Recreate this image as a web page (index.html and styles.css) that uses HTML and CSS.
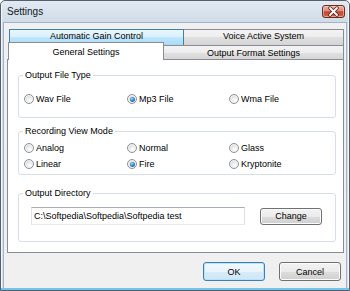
FILE: index.html
```html
<!DOCTYPE html>
<html>
<head>
<meta charset="utf-8">
<link rel="stylesheet" href="styles.css">
</head>
<body>
<div class="window">
  <div class="titlebar">
    <span class="title">Settings</span>
    <div class="close">
      <svg width="21" height="11" viewBox="0 0 21 11">
        <path d="M7 2 L14 9 M14 2 L7 9" stroke="#5b2015" stroke-width="3.4" stroke-linecap="round" fill="none"/>
        <path d="M7 2 L14 9 M14 2 L7 9" stroke="#ffffff" stroke-width="1.8" stroke-linecap="round" fill="none"/>
      </svg>
    </div>
  </div>
  <div class="client">
    <div class="tabs">
      <div class="tabrow back">
        <div class="tab hover w175">Automatic Gain Control</div>
        <div class="tab w161">Voice Active System</div>
      </div>
      <div class="tabrow front">
        <div class="tab selected w156">General Settings</div>
        <div class="tab w181">Output Format Settings</div>
      </div>
    </div>
    <div class="panel">
      <fieldset class="group g1">
        <legend>Output File Type</legend>
        <div class="gbody radios one">
          <label class="opt"><span class="radio"></span>Wav File</label>
          <label class="opt"><span class="radio on"></span>Mp3 File</label>
          <label class="opt"><span class="radio"></span>Wma File</label>
        </div>
      </fieldset>
      <fieldset class="group g2">
        <legend>Recording View Mode</legend>
        <div class="gbody radios two">
          <label class="opt"><span class="radio"></span>Analog</label>
          <label class="opt"><span class="radio"></span>Normal</label>
          <label class="opt"><span class="radio"></span>Glass</label>
          <label class="opt"><span class="radio"></span>Linear</label>
          <label class="opt"><span class="radio on"></span>Fire</label>
          <label class="opt"><span class="radio"></span>Kryptonite</label>
        </div>
      </fieldset>
      <fieldset class="group g3">
        <legend>Output Directory</legend>
        <div class="gbody dirrow">
          <input class="path" type="text" value="C:\Softpedia\Softpedia\Softpedia test" readonly>
          <button class="btn change">Change</button>
        </div>
      </fieldset>
    </div>
    <div class="actions">
      <button class="btn default">OK</button>
      <button class="btn">Cancel</button>
    </div>
  </div>
</div>
</body>
</html>
```
FILE: styles.css
```css
html, body {
  margin: 0;
  padding: 0;
}
body {
  width: 350px;
  height: 291px;
  overflow: hidden;
  font-family: "Liberation Sans", Arial, sans-serif;
  font-size: 9px;
  color: #000;
}
.window {
  box-sizing: border-box;
  width: 350px;
  height: 291px;
  border: 1px solid #55606d;
  border-radius: 5px 5px 0 0;
  background: linear-gradient(#e2eaf3, #cfdbe8 22px, #d6e0eb);
  padding: 0 2px 2px;
  display: flex;
  flex-direction: column;
  box-shadow: inset 0 -2px 0 #72c4ea, inset 1px 0 0 #f4f8fb, inset -1px 0 0 #f4f8fb;
}
.titlebar {
  height: 21px;
  flex: none;
  display: flex;
  align-items: center;
  justify-content: space-between;
  padding: 0 2px 0 4px;
}
.title {
  font-size: 10px;
  color: #101820;
}
.close {
  box-sizing: border-box;
  width: 23px;
  height: 13px;
  border: 1px solid #6e2c20;
  border-radius: 3px;
  background: linear-gradient(#eab1a3 0%, #dc8b78 45%, #c5452d 52%, #d26549 100%);
  display: flex;
  align-items: center;
  justify-content: center;
  box-shadow: inset 0 0 0 1px rgba(255, 220, 210, 0.5);
}
.close svg {
  display: block;
}
.client {
  flex: 1;
  background: #f0f0f0;
  border-left: 1px solid #a4b4c6;
  border-right: 1px solid #a4b4c6;
  border-top: 1px solid #a4b4c6;
  display: flex;
  flex-direction: column;
}
.tabs {
  margin: 6px 2px 0 3px;
}
.tabrow {
  display: flex;
  align-items: flex-end;
}
.tabrow.back {
  padding-left: 2px;
  height: 16px;
}
.tabrow.front {
  padding-left: 1px;
  margin-top: -3px;
  height: 18px;
}
.tab {
  box-sizing: border-box;
  border: 1px solid #898c95;
  border-bottom: none;
  text-align: center;
  line-height: 12px;
  background: linear-gradient(#f4f4f4 0%, #ececec 50%, #e0e0e0 50%, #d4d4d4 100%);
  white-space: nowrap;
}
.tab + .tab {
  margin-left: -1px;
}
.back .tab {
  height: 16px;
  padding-top: 0;
}
.front .tab {
  height: 15px;
  padding-top: 1px;
}
.tab.hover {
  border-color: #3c7fb1;
  background: linear-gradient(#eaf6fd 0%, #d9f0fc 50%, #bee6fd 50%, #a9dbf6 100%);
  position: relative;
  z-index: 1;
}
.front .tab.selected {
  height: 18px;
  padding-top: 3px;
  background: #fff;
  position: relative;
  z-index: 2;
}
.w175 { width: 175px; }
.w161 { width: 161px; }
.w156 { width: 156px; }
.w181 { width: 181px; }

.panel {
  box-sizing: border-box;
  margin: -1px 2px 0 3px;
  height: 194px;
  background: #fff;
  border: 1px solid #898c95;
  display: flex;
  flex-direction: column;
}
.group {
  margin: 0 7px 0 10px;
  padding: 0;
  border: 1px solid #d5dfe5;
  border-radius: 3px;
  min-inline-size: auto;
}
.group legend {
  padding: 0 2px;
  margin-left: 4px;
  line-height: 11px;
  color: #000;
}
.g1 { margin-top: 10px; }
.g2 { margin-top: 8px; }
.g3 { margin-top: 13px; }

.radios {
  display: grid;
  grid-template-columns: 103px 102px 1fr;
  padding-left: 5px;
}
.radios.one {
  padding-top: 12px;
  padding-bottom: 12px;
  grid-auto-rows: 12px;
}
.radios.two {
  padding-top: 3px;
  padding-bottom: 2px;
  grid-auto-rows: 16px;
}
.opt {
  display: flex;
  align-items: center;
  white-space: nowrap;
}
.radio {
  box-sizing: border-box;
  width: 10px;
  height: 10px;
  margin-right: 2px;
  border-radius: 50%;
  border: 1px solid #8e9194;
  background: radial-gradient(circle at 60% 65%, #ffffff 0%, #eeeeee 35%, #cfcfcf 80%);
  box-shadow: inset 0 0 0 1px #f6f6f6;
  display: flex;
  align-items: center;
  justify-content: center;
  flex: none;
}
.radio.on::after {
  content: "";
  width: 5px;
  height: 5px;
  border-radius: 50%;
  background: radial-gradient(circle at 40% 35%, #a6e0ff 0%, #3a8fd0 40%, #174a80 100%);
}
.dirrow {
  display: flex;
  align-items: center;
  padding: 8px 0 16px 12px;
}
.path {
  box-sizing: border-box;
  width: 214px;
  height: 18px;
  margin: 0;
  padding: 0 2px;
  border: 1px solid;
  border-color: #abadb3 #dbdfe6 #e3e9ef #e2e3ea;
  font: inherit;
  color: #000;
  background: #fff;
  outline: none;
}
.btn {
  box-sizing: border-box;
  width: 62px;
  height: 19px;
  margin: 0;
  padding: 0;
  font: inherit;
  color: #000;
  border: 1px solid #707070;
  border-radius: 3px;
  background: linear-gradient(#f2f2f2 0%, #ebebeb 50%, #dddddd 50%, #cfcfcf 100%);
  box-shadow: inset 0 0 0 1px #fbfbfb;
}
.btn.change {
  height: 17px;
  margin-left: 15px;
}
.btn.default {
  border-color: #3c7fb1;
  background: linear-gradient(#f3f9fd 0%, #e8f4fb 50%, #d8ecf8 50%, #cde6f6 100%);
  box-shadow: inset 0 0 0 1px #b6e2fb;
}
.actions {
  display: flex;
  justify-content: flex-end;
  gap: 14px;
  margin-top: 9px;
  padding-right: 5px;
}
```
